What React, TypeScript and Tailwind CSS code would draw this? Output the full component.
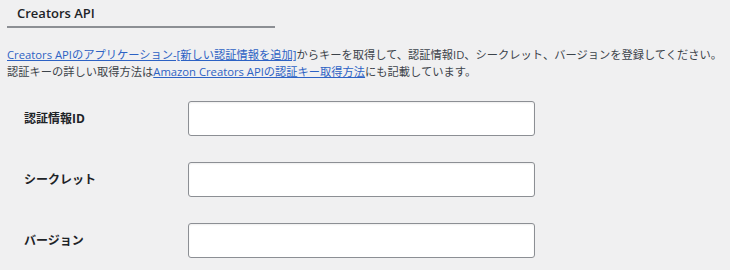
export default function App() {
  const fields = ["認証情報ID", "シークレット", "バージョン"]

  return (
    <div
      className="h-[270px] w-[730px] overflow-hidden bg-[#f0f0f1] text-[#3c434a]"
      style={{ fontFamily: '"Open Sans", "Noto Sans CJK JP", sans-serif' }}
    >
      {/* Section heading */}
      <div className="ml-[7px] w-[268px] border-b-2 border-[#8c8f94] pb-[5px] pl-[10px] pt-[5px]">
        <h2 className="text-[13px] font-semibold leading-[16px] text-[#1d2327]">Creators API</h2>
      </div>

      {/* Description */}
      <div className="mt-[18px] whitespace-nowrap px-[7px] text-[11.25px] leading-[17px]">
        <p>
          <a className="text-[#2d62c4] underline" href="#">
            Creators APIのアプリケーション-[新しい認証情報を追加]
          </a>
          からキーを取得して、認証情報ID、シークレット、バージョンを登録してください。
        </p>
        <p>
          認証キーの詳しい取得方法は
          <a className="text-[#2d62c4] underline" href="#">
            Amazon Creators APIの認証キー取得方法
          </a>
          にも記載しています。
        </p>
      </div>

      {/* Form rows */}
      <div className="mt-[21px] flex flex-col gap-[26px] pl-[24px]">
        {fields.map((label) => (
          <div key={label} className="flex items-center">
            <label className="w-[164px] text-[12px] font-bold text-[#1d2327]">{label}</label>
            <input
              type="text"
              className="h-[35px] w-[347px] rounded-[3px] border border-[#8c8f94] bg-white shadow-[inset_0_1px_2px_rgba(0,0,0,0.07)]"
            />
          </div>
        ))}
      </div>
    </div>
  )
}
